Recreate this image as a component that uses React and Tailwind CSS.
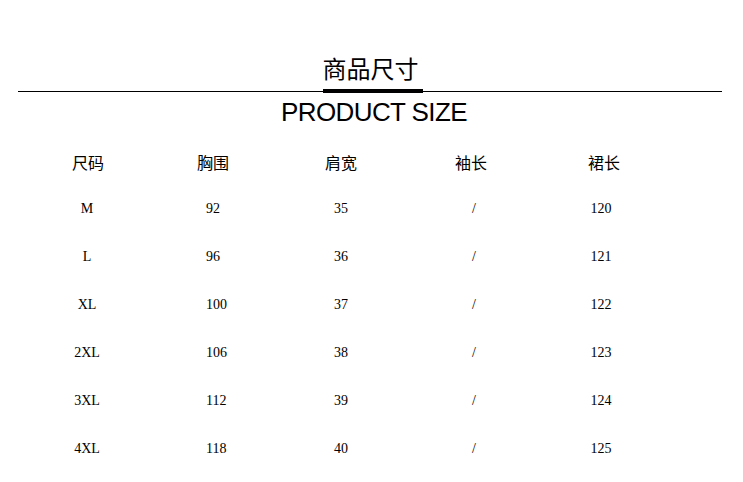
const rows = [
  ["M", "92", "35", "/", "120"],
  ["L", "96", "36", "/", "121"],
  ["XL", "100", "37", "/", "122"],
  ["2XL", "106", "38", "/", "123"],
  ["3XL", "112", "39", "/", "124"],
  ["4XL", "118", "40", "/", "125"],
];

const headers = ["尺码", "胸围", "肩宽", "袖长", "裙长"];

export default function App() {
  return (
    <main className="w-[743px] h-[482px] bg-white text-black overflow-hidden pt-[56px]">
      <h1
        className="text-center text-[24px] leading-[24px] pr-[2px]"
        style={{ fontFamily: '"Noto Sans CJK SC", sans-serif' }}
      >
        商品尺寸
      </h1>

      <div className="ml-[18px] mr-[21px] mt-[9px] flex items-center h-[4px]">
        <div className="w-[305px] h-px bg-black" />
        <div className="w-[100px] h-[4px] bg-black" />
        <div className="flex-1 h-px bg-black" />
      </div>

      <h2
        className="mt-[4px] pl-[5px] text-center text-[26px] leading-[30px] tracking-[-0.6px]"
        style={{ fontFamily: '"Liberation Sans", Arial, sans-serif' }}
      >
        PRODUCT SIZE
      </h2>

      <div className="mt-[12px] ml-[18px]">
        <div
          className="flex items-center h-[46px] text-[16px] leading-[16px]"
          style={{ fontFamily: '"Noto Sans CJK SC", sans-serif' }}
        >
          <div className="w-[140px] text-center">{headers[0]}</div>
          <div className="w-[110px] text-center">{headers[1]}</div>
          <div className="w-[146px] text-center">{headers[2]}</div>
          <div className="w-[114px] text-center">{headers[3]}</div>
          <div className="w-[152px] text-center">{headers[4]}</div>
        </div>

        {rows.map((r) => (
          <div
            key={r[0]}
            className="flex items-center h-[48px] text-[14px] leading-[14px]"
            style={{ fontFamily: '"Liberation Serif", "Times New Roman", serif' }}
          >
            <div className="w-[140px] text-center pr-[2px]">{r[0]}</div>
            <div className="w-[110px] pl-[48px]">{r[1]}</div>
            <div className="w-[146px] text-center">{r[2]}</div>
            <div className="w-[114px] text-center pl-[6px]">{r[3]}</div>
            <div className="w-[152px] text-center pr-[6px]">{r[4]}</div>
          </div>
        ))}
      </div>
    </main>
  );
}
